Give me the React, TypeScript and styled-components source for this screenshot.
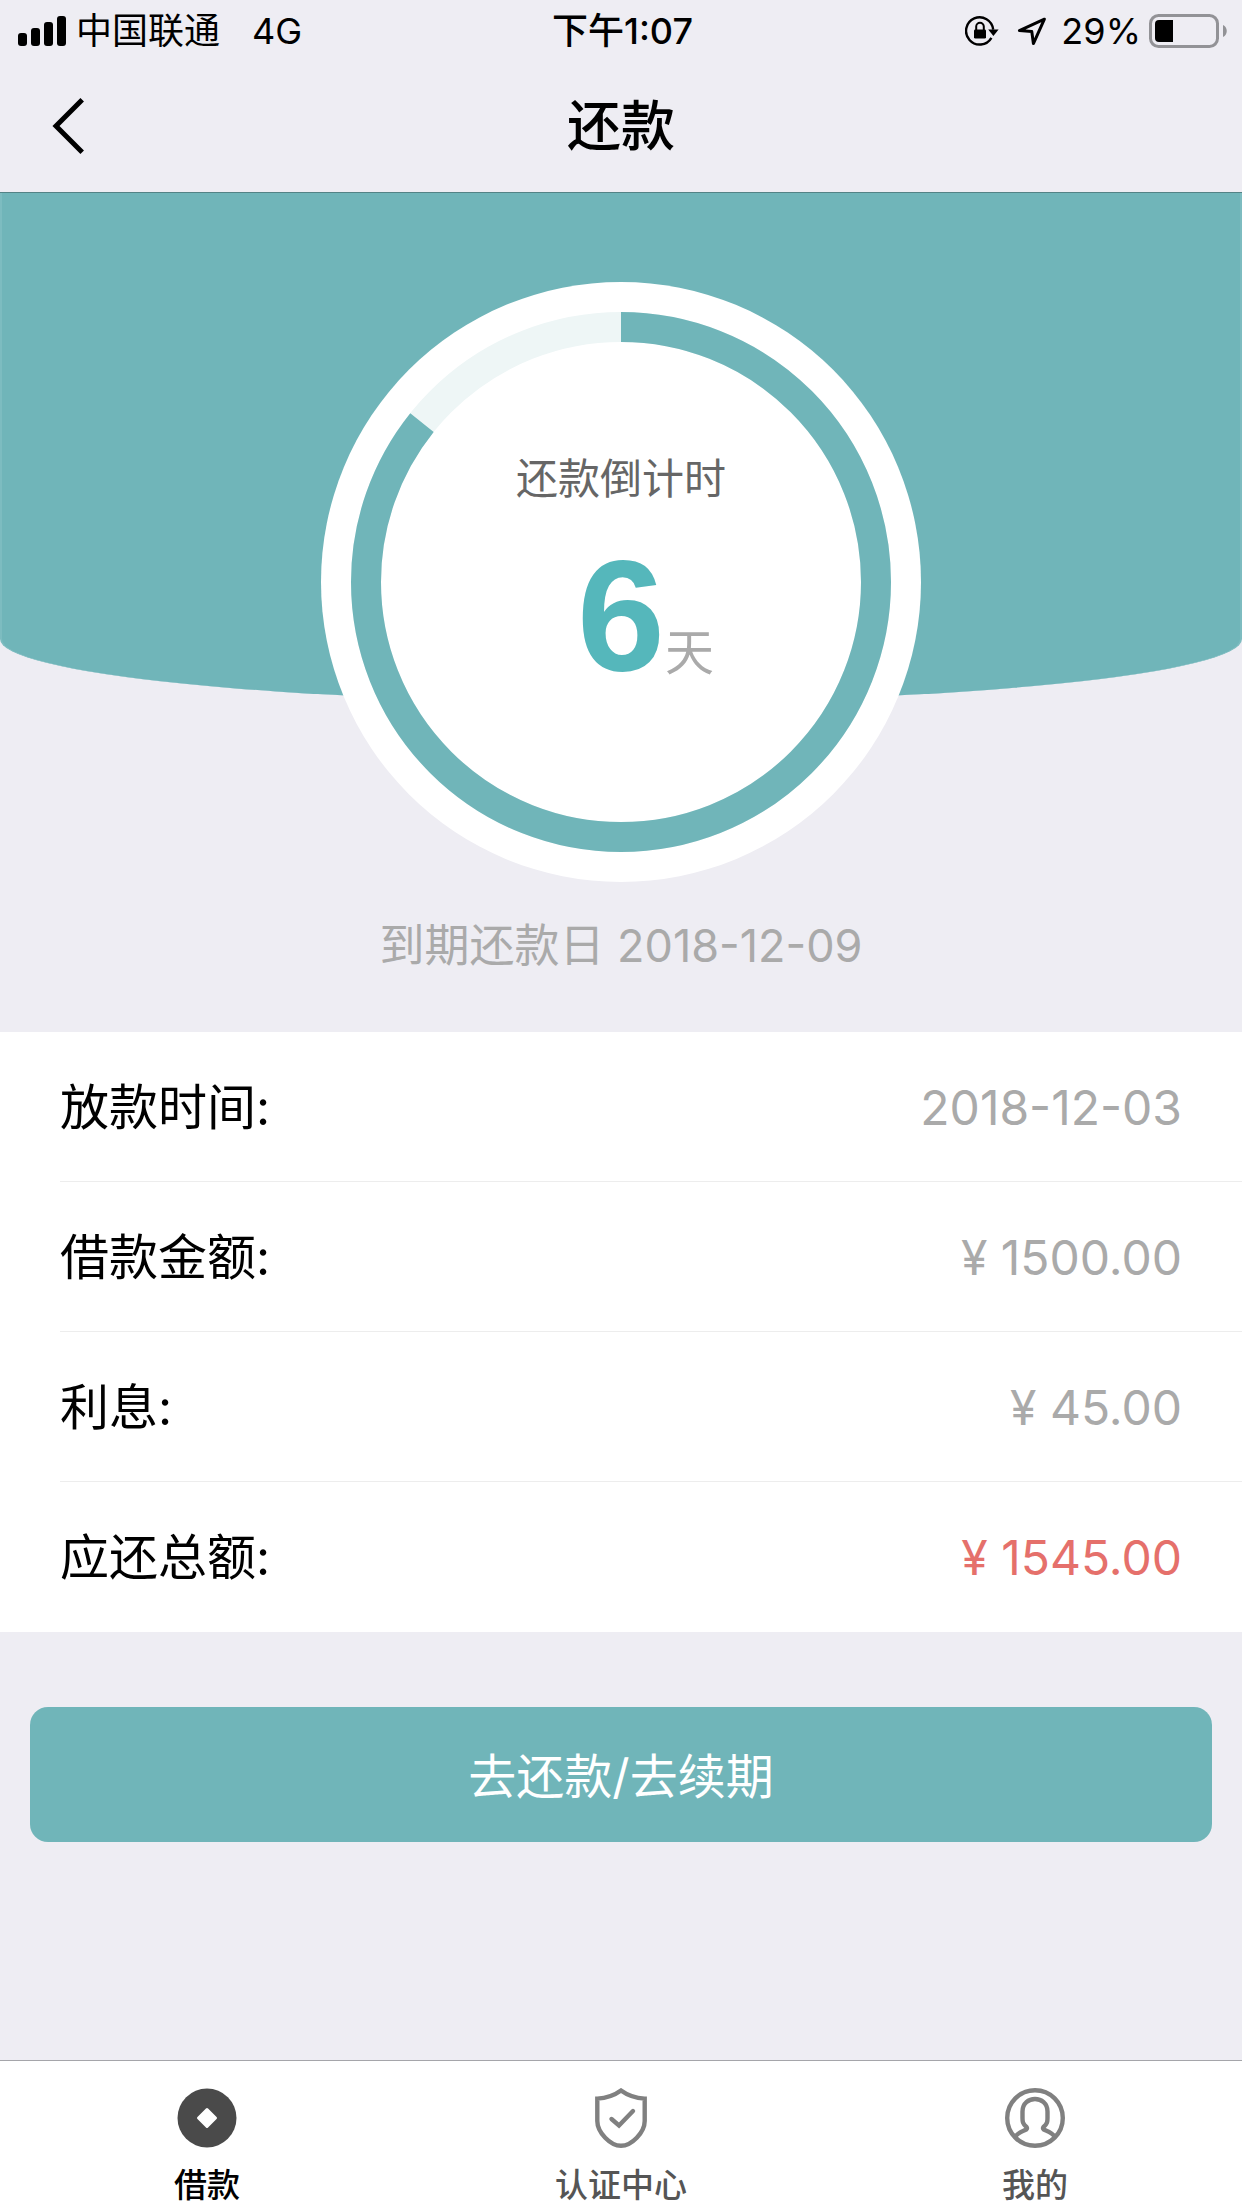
import React from "react";
import styled, { createGlobalStyle } from "styled-components";

const color = {
  page: "#eeedf3",
  teal: "#70b5b9",
  tealEdge: "#7dbcc0",
  tealLine: "#538386",
  track: "#eef6f6",
  count: "#55b7bb",
  black: "#000000",
  label: "#666666",
  muted: "#aaaaaa",
  danger: "#e5706b",
  tab: "#555555",
  icon: "#808080",
};

const GlobalStyle = createGlobalStyle`
  * { box-sizing: border-box; }
  body {
    margin: 0;
    background: ${color.page};
    font-family: Inter, "Noto Sans CJK SC", sans-serif;
    color: ${color.black};
  }
  h1, p, dl, dt, dd { margin: 0; font-weight: 400; }
`;

const Screen = styled.div`
  min-height: 100vh;
  display: flex;
  flex-direction: column;
  background: ${color.page};
`;

const StatusBar = styled.div`
  height: 62px;
  padding: 0 15px 0 18px;
  display: grid;
  grid-template-columns: 1fr auto 1fr;
  align-items: center;
  font-size: 36px;
  line-height: 62px;
`;

const StatusGroup = styled.div<{ $end?: boolean; $gap: number }>`
  display: flex;
  align-items: center;
  justify-content: ${(p) => (p.$end ? "flex-end" : "flex-start")};
  gap: ${(p) => p.$gap}px;
`;

const Network = styled.span`
  margin-left: 22px;
`;

const Clock = styled.time`
  font-weight: 500;
`;

const StatusIcons = styled.span`
  display: flex;
  align-items: center;
  gap: 18px;
  margin-right: 6px;
`;

const NavBar = styled.header`
  height: 131px;
  padding: 0 48px;
  display: grid;
  grid-template-columns: 1fr auto 1fr;
  align-items: center;
  border-bottom: 1px solid ${color.tealLine};
`;

const BackButton = styled.button`
  display: flex;
  align-items: center;
  width: 60px;
  height: 60px;
  padding: 0;
  border: 0;
  background: none;
  color: inherit;
`;

const Title = styled.h1`
  font-size: 54px;
  line-height: 80px;
  && { font-weight: 500; }
`;

const Main = styled.main`
  flex: 1;
`;

const Hero = styled.section`
  display: grid;
  justify-items: center;
  grid-template-rows: auto 150px;
`;

const Backdrop = styled.div`
  grid-area: 1 / 1;
  width: 100%;
  height: 509px;
  background: ${color.teal};
  border: 0 solid ${color.tealEdge};
  border-width: 0 2px;
  border-radius: 0 0 50% 50% / 0 0 63px 63px;
`;

const Dial = styled.div`
  grid-area: 1 / 1;
  width: 600px;
  height: 600px;
  margin-top: 89px;
  display: grid;
  justify-items: center;
  border-radius: 50%;
  background: #ffffff;
`;

const Ring = styled.svg`
  grid-area: 1 / 1;
  align-self: center;
`;

const Countdown = styled.div`
  grid-area: 1 / 1;
  width: 100%;
  padding-top: 167px;
`;

const CountLabel = styled.p`
  text-align: center;
  font-size: 42px;
  line-height: 60px;
  color: ${color.label};
`;

const CountValue = styled.p`
  margin-top: 16px;
  display: grid;
  grid-template-columns: 1fr auto 1fr;
  align-items: baseline;
  line-height: 180px;
  color: ${color.muted};
`;

const Days = styled.strong`
  grid-column: 2;
  font-family: "Liberation Sans", Arial, sans-serif;
  font-size: 158px;
  font-weight: 700;
  color: ${color.count};
`;

const Unit = styled.span`
  font-size: 49px;
`;

const DueDate = styled.p`
  padding-top: 34px;
  font-size: 45px;
  line-height: 60px;
  color: ${color.muted};
`;

const Details = styled.dl`
  padding-left: 60px;
  background: #ffffff;
`;

const Row = styled.div`
  height: 150px;
  padding: 2px 60px 0 0;
  display: flex;
  align-items: center;
  justify-content: space-between;
  line-height: 72px;
  border-bottom: 1px solid #ededed;

  &:last-child { border-bottom-color: transparent; }
`;

const Label = styled.dt`
  font-size: 49px;
`;

const Amount = styled.dd<{ $due?: boolean }>`
  font-size: 48px;
  color: ${(p) => (p.$due ? color.danger : color.muted)};
`;

const Actions = styled.div`
  padding: 75px 30px;
`;

const PayButton = styled.button`
  display: block;
  width: 100%;
  height: 135px;
  padding: 4px 0 0;
  border: 0;
  border-radius: 18px;
  background: ${color.teal};
  color: #ffffff;
  font-family: inherit;
  font-size: 48px;
  line-height: 72px;
`;

const TabBar = styled.nav`
  height: 148px;
  display: grid;
  grid-template-columns: repeat(3, 1fr);
  background: #ffffff;
  border-top: 1px solid #a5a5aa;
`;

const Tab = styled.a<{ $active?: boolean }>`
  padding-top: 27px;
  display: flex;
  flex-direction: column;
  align-items: center;
  gap: 13px;
  font-size: 33px;
  font-weight: 500;
  line-height: 48px;
  text-decoration: none;
  color: ${(p) => (p.$active ? color.black : color.tab)};
`;

const SignalIcon = () => (
  <svg width="48" height="30" viewBox="0 0 48 30" aria-hidden="true">
    <rect x="0" y="17" width="9" height="13" rx="3" />
    <rect x="13" y="12" width="9" height="18" rx="3" />
    <rect x="26" y="6" width="9" height="24" rx="3" />
    <rect x="39" y="0" width="9" height="30" rx="3" />
  </svg>
);

const RotationLockIcon = () => (
  <svg width="34" height="30" viewBox="0 0 34 30" aria-hidden="true">
    <path d="M26.4 21.8A13.6 13.6 0 1 1 28.2 13.6" fill="none" stroke="#000" strokeWidth="2.4" />
    <path d="M23.2 13.6H33.6L28.4 20Z" />
    <rect x="9" y="13.4" width="12" height="9.2" rx="1.4" />
    <path d="M11.2 14V10.6a3.8 3.8 0 0 1 7.6 0V14" fill="none" stroke="#000" strokeWidth="2" />
  </svg>
);

const LocationIcon = () => (
  <svg width="30" height="30" viewBox="0 0 30 30" aria-hidden="true">
    <path d="M27.4 3.2 2.4 14.6 14.8 15.6 16.4 27.6Z" fill="none" stroke="#000" strokeWidth="3" strokeLinejoin="round" />
  </svg>
);

const BatteryIcon = () => (
  <svg width="78" height="34" viewBox="0 0 78 34" aria-hidden="true">
    <rect x="1.5" y="1.5" width="67" height="31" rx="8" fill="none" stroke="#929296" strokeWidth="3" />
    <path d="M24 6v22H10a4 4 0 0 1-4-4V10a4 4 0 0 1 4-4Z" />
    <path d="M74 11c5 2 5 10 0 12Z" fill="#929296" />
  </svg>
);

const BackIcon = () => (
  <svg width="42" height="60" viewBox="0 0 42 60" fill="none" stroke="currentColor" strokeWidth="5" aria-hidden="true">
    <path d="M34.2 2.8 8 29 34.2 55.2" />
  </svg>
);

const LoanIcon = () => (
  <svg width="60" height="60" viewBox="0 0 60 60" aria-hidden="true">
    <circle cx="30" cy="30" r="29.5" fill="#4a4a4a" />
    <rect x="22.5" y="22.5" width="15" height="15" rx="1.5" fill="#fff" transform="rotate(45 30 30)" />
  </svg>
);

const ShieldIcon = () => (
  <svg width="60" height="60" viewBox="0 0 60 60" fill="none" stroke={color.icon} strokeWidth="4.4" aria-hidden="true">
    <path d="M30 2.6C23.5 7.4 15.5 10.2 6.3 10.6V33C6.3 44.5 19.5 57.8 30 57.8S53.7 44.5 53.7 33V10.6C44.5 10.2 36.5 7.4 30 2.6Z" />
    <path d="M20.5 31 28 37.5 42 23" strokeLinecap="round" />
  </svg>
);

const ProfileIcon = () => (
  <svg width="60" height="60" viewBox="0 0 60 60" fill="none" stroke={color.icon} strokeWidth="4.4" aria-hidden="true">
    <circle cx="30" cy="30" r="27.8" />
    <path d="M10.5 48.5C13 44.5 17.5 43.3 21.2 41.6Q22.5 40.5 21.5 39C17.5 35.5 17.5 33.5 17.5 30V23.5C17.5 6.8 42.5 6.8 42.5 23.5V30C42.5 33.5 42.5 35.5 38.5 39Q37.5 40.5 38.8 41.6C42.5 43.3 47 44.5 49.5 48.5" />
  </svg>
);

const RADIUS = 255;
const CIRCUMFERENCE = 2 * Math.PI * RADIUS;

function ProgressRing({ done, total }: { done: number; total: number }) {
  const length = (CIRCUMFERENCE * done) / total;
  return (
    <Ring width="540" height="540" viewBox="0 0 540 540" fill="none" strokeWidth="30" aria-hidden="true">
      <circle cx="270" cy="270" r={RADIUS} stroke={color.track} />
      <circle
        cx="270"
        cy="270"
        r={RADIUS}
        stroke={color.teal}
        strokeDasharray={`${length} ${CIRCUMFERENCE}`}
        transform="rotate(-90 270 270)"
      />
    </Ring>
  );
}

const details = [
  { label: "放款时间:", value: "2018-12-03" },
  { label: "借款金额:", value: "¥ 1500.00" },
  { label: "利息:", value: "¥ 45.00" },
  { label: "应还总额:", value: "¥ 1545.00", due: true },
];

const tabs = [
  { label: "借款", href: "#loan", icon: <LoanIcon />, active: true },
  { label: "认证中心", href: "#verify", icon: <ShieldIcon />, active: false },
  { label: "我的", href: "#me", icon: <ProfileIcon />, active: false },
];

export default function App() {
  return (
    <Screen lang="zh-CN">
      <GlobalStyle />
      <StatusBar>
        <StatusGroup $gap={10}>
          <SignalIcon />
          <span>中国联通</span>
          <Network>4G</Network>
        </StatusGroup>
        <Clock>下午1:07</Clock>
        <StatusGroup $end $gap={8}>
          <StatusIcons>
            <RotationLockIcon />
            <LocationIcon />
          </StatusIcons>
          <span>29%</span>
          <BatteryIcon />
        </StatusGroup>
      </StatusBar>
      <NavBar>
        <BackButton type="button" aria-label="返回">
          <BackIcon />
        </BackButton>
        <Title>还款</Title>
      </NavBar>
      <Main>
        <Hero>
          <Backdrop />
          <Dial>
            <ProgressRing done={6} total={7} />
            <Countdown>
              <CountLabel>还款倒计时</CountLabel>
              <CountValue>
                <Days>6</Days>
                <Unit>天</Unit>
              </CountValue>
            </Countdown>
          </Dial>
          <DueDate>到期还款日 2018-12-09</DueDate>
        </Hero>
        <Details>
          {details.map((row) => (
            <Row key={row.label}>
              <Label>{row.label}</Label>
              <Amount $due={row.due}>{row.value}</Amount>
            </Row>
          ))}
        </Details>
        <Actions>
          <PayButton type="button">去还款/去续期</PayButton>
        </Actions>
      </Main>
      <TabBar>
        {tabs.map((tab) => (
          <Tab key={tab.href} href={tab.href} $active={tab.active} aria-current={tab.active ? "page" : undefined}>
            {tab.icon}
            {tab.label}
          </Tab>
        ))}
      </TabBar>
    </Screen>
  );
}
